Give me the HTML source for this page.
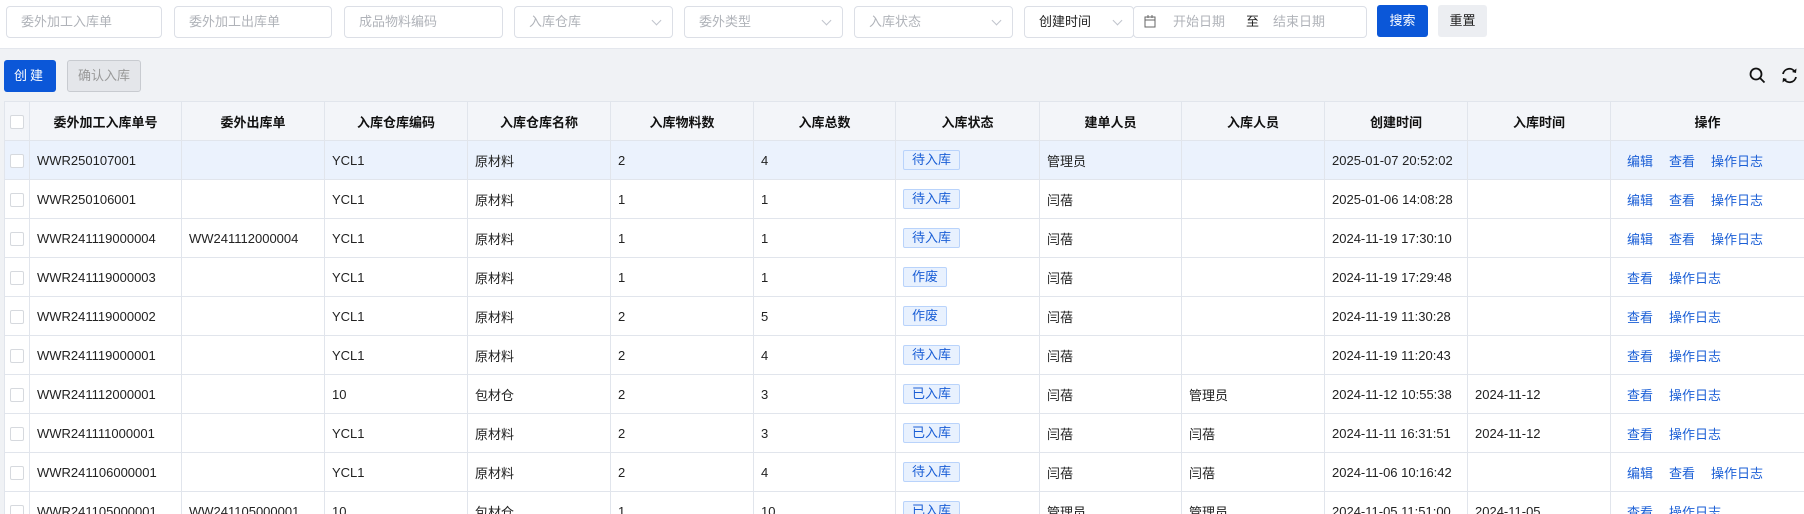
<!DOCTYPE html>
<html style="width:1804px;height:514px;overflow:hidden"><head><meta charset="utf-8"><style>
*{box-sizing:border-box;margin:0;padding:0}
body{width:1804px;height:514px;overflow:hidden;background:#f0f2f5;font-family:"Liberation Sans","Noto Sans CJK SC",sans-serif;font-size:13px;color:#222;position:relative}
.top{position:absolute;left:0;top:0;width:1804px;height:49px;background:#fff;border-bottom:1px solid #e4e7ed}
.in{position:absolute;top:6px;height:32px;border:1px solid #dcdfe6;border-radius:4px;background:#fff;color:#b0b3b9;padding-left:14px;line-height:30px;font-size:13px}
.in .ch{position:absolute;right:12px;top:10px;width:7px;height:7px;border-right:1px solid #c0c4cc;border-bottom:1px solid #c0c4cc;transform:rotate(45deg)}
.btn{position:absolute;border-radius:3px;text-align:center;font-size:13px}
.tbl{position:absolute;left:4px;top:101px;width:1800px;background:#fff;border-collapse:collapse;table-layout:fixed}
.tbl td,.tbl th{border:1px solid #e1e5ec;height:39px;padding:0 0 0 7px;white-space:nowrap;overflow:hidden;text-align:left;font-weight:normal}
.tbl th{background:#f3f5f9;font-weight:bold;text-align:center;padding:0;color:#111}
.tbl tr.hl td{background:#ebf2fd}
.cb{display:inline-block;width:14px;height:14px;border:1px solid #d6d9de;background:#fff;border-radius:2px;vertical-align:middle}
.tbl td.c{padding:0;text-align:center}
.tag{display:inline-block;height:20px;line-height:18px;padding:0 8px;border:1px solid #b9d3fb;background:#e8f1fe;color:#1b5fd6;border-radius:2px;font-size:13px}
.a{color:#1b5fd6;margin-right:16px}
</style></head><body>
<div class="top">
<div class="in" style="left:6px;width:156px">委外加工入库单</div>
<div class="in" style="left:174px;width:158px">委外加工出库单</div>
<div class="in" style="left:344px;width:159px">成品物料编码</div>
<div class="in" style="left:514px;width:159px">入库仓库<span class="ch"></span></div>
<div class="in" style="left:684px;width:159px">委外类型<span class="ch"></span></div>
<div class="in" style="left:854px;width:159px">入库状态<span class="ch"></span></div>
<div class="in" style="left:1024px;width:110px;color:#222">创建时间<span class="ch"></span></div>
<div class="in" style="left:1133px;width:234px;padding-left:10px"><svg width="12" height="13" style="vertical-align:-2px;margin-right:17px"><rect x="1" y="2" width="10" height="10" fill="none" stroke="#666"/><line x1="1" y1="5" x2="11" y2="5" stroke="#666"/><line x1="4" y1="0" x2="4" y2="3" stroke="#666"/><line x1="8" y1="0" x2="8" y2="3" stroke="#666"/></svg>开始日期<span style="color:#222;margin:0 14px 0 21px">至</span>结束日期</div>
<div class="btn" style="left:1377px;top:5px;width:51px;height:32px;line-height:32px;background:#0b57d8;color:#fff">搜索</div>
<div class="btn" style="left:1438px;top:5px;width:49px;height:32px;line-height:32px;background:#eceef2;color:#222">重置</div>
</div>
<div class="btn" style="left:4px;top:60px;width:52px;height:32px;line-height:32px;background:#0b57d8;color:#fff;letter-spacing:3px">创建</div>
<div class="btn" style="left:67px;top:60px;width:74px;height:32px;line-height:30px;background:#e4e6ea;border:1px solid #c8cbd0;color:#999">确认入库</div>
<svg style="position:absolute;left:1749px;top:67px" width="18" height="18"><circle cx="7" cy="7" r="5.5" fill="none" stroke="#111" stroke-width="1.8"/><line x1="11" y1="11" x2="15.5" y2="15.5" stroke="#111" stroke-width="1.8"/></svg>
<svg style="position:absolute;left:1780px;top:66px" width="19" height="19"><path d="M3 8 A6.5 6.5 0 0 1 15 6" fill="none" stroke="#111" stroke-width="1.8"/><path d="M16 11 A6.5 6.5 0 0 1 4 13" fill="none" stroke="#111" stroke-width="1.8"/><path d="M12 6 L16 7 L16.5 2.5Z" fill="#111"/><path d="M7 13 L3 12 L2.5 16.5Z" fill="#111"/></svg>
<table class="tbl">
<colgroup><col style="width:25px"><col style="width:152px"><col style="width:143px"><col style="width:143px"><col style="width:143px"><col style="width:143px"><col style="width:142px"><col style="width:144px"><col style="width:142px"><col style="width:143px"><col style="width:143px"><col style="width:143px"><col style="width:194px"></colgroup>
<tr><th><span class="cb"></span></th><th>委外加工入库单号</th><th>委外出库单</th><th>入库仓库编码</th><th>入库仓库名称</th><th>入库物料数</th><th>入库总数</th><th>入库状态</th><th>建单人员</th><th>入库人员</th><th>创建时间</th><th>入库时间</th><th>操作</th></tr>
<tr class="hl"><td class="c"><span class="cb"></span></td><td>WWR250107001</td><td></td><td>YCL1</td><td>原材料</td><td>2</td><td>4</td><td><span class="tag">待入库</span></td><td>管理员</td><td></td><td>2025-01-07 20:52:02</td><td></td><td style="padding-left:16px"><span class="a">编辑</span><span class="a">查看</span><span class="a">操作日志</span></td></tr>
<tr><td class="c"><span class="cb"></span></td><td>WWR250106001</td><td></td><td>YCL1</td><td>原材料</td><td>1</td><td>1</td><td><span class="tag">待入库</span></td><td>闫蓓</td><td></td><td>2025-01-06 14:08:28</td><td></td><td style="padding-left:16px"><span class="a">编辑</span><span class="a">查看</span><span class="a">操作日志</span></td></tr>
<tr><td class="c"><span class="cb"></span></td><td>WWR241119000004</td><td>WW241112000004</td><td>YCL1</td><td>原材料</td><td>1</td><td>1</td><td><span class="tag">待入库</span></td><td>闫蓓</td><td></td><td>2024-11-19 17:30:10</td><td></td><td style="padding-left:16px"><span class="a">编辑</span><span class="a">查看</span><span class="a">操作日志</span></td></tr>
<tr><td class="c"><span class="cb"></span></td><td>WWR241119000003</td><td></td><td>YCL1</td><td>原材料</td><td>1</td><td>1</td><td><span class="tag">作废</span></td><td>闫蓓</td><td></td><td>2024-11-19 17:29:48</td><td></td><td style="padding-left:16px"><span class="a">查看</span><span class="a">操作日志</span></td></tr>
<tr><td class="c"><span class="cb"></span></td><td>WWR241119000002</td><td></td><td>YCL1</td><td>原材料</td><td>2</td><td>5</td><td><span class="tag">作废</span></td><td>闫蓓</td><td></td><td>2024-11-19 11:30:28</td><td></td><td style="padding-left:16px"><span class="a">查看</span><span class="a">操作日志</span></td></tr>
<tr><td class="c"><span class="cb"></span></td><td>WWR241119000001</td><td></td><td>YCL1</td><td>原材料</td><td>2</td><td>4</td><td><span class="tag">待入库</span></td><td>闫蓓</td><td></td><td>2024-11-19 11:20:43</td><td></td><td style="padding-left:16px"><span class="a">查看</span><span class="a">操作日志</span></td></tr>
<tr><td class="c"><span class="cb"></span></td><td>WWR241112000001</td><td></td><td>10</td><td>包材仓</td><td>2</td><td>3</td><td><span class="tag">已入库</span></td><td>闫蓓</td><td>管理员</td><td>2024-11-12 10:55:38</td><td>2024-11-12</td><td style="padding-left:16px"><span class="a">查看</span><span class="a">操作日志</span></td></tr>
<tr><td class="c"><span class="cb"></span></td><td>WWR241111000001</td><td></td><td>YCL1</td><td>原材料</td><td>2</td><td>3</td><td><span class="tag">已入库</span></td><td>闫蓓</td><td>闫蓓</td><td>2024-11-11 16:31:51</td><td>2024-11-12</td><td style="padding-left:16px"><span class="a">查看</span><span class="a">操作日志</span></td></tr>
<tr><td class="c"><span class="cb"></span></td><td>WWR241106000001</td><td></td><td>YCL1</td><td>原材料</td><td>2</td><td>4</td><td><span class="tag">待入库</span></td><td>闫蓓</td><td>闫蓓</td><td>2024-11-06 10:16:42</td><td></td><td style="padding-left:16px"><span class="a">编辑</span><span class="a">查看</span><span class="a">操作日志</span></td></tr>
<tr><td class="c"><span class="cb"></span></td><td>WWR241105000001</td><td>WW241105000001</td><td>10</td><td>包材仓</td><td>1</td><td>10</td><td><span class="tag">已入库</span></td><td>管理员</td><td>管理员</td><td>2024-11-05 11:51:00</td><td>2024-11-05</td><td style="padding-left:16px"><span class="a">查看</span><span class="a">操作日志</span></td></tr>
</table>
</body></html>
